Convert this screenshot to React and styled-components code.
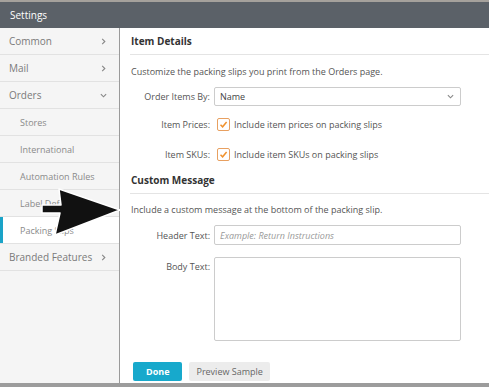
import React from 'react'
import styled, { createGlobalStyle } from 'styled-components'

const Global = createGlobalStyle`
    html, body {
        margin: 0;
        padding: 0;
        background: #fff;
    }
    body {
        font-family: "Open Sans", "Liberation Sans", sans-serif;
        color: #444;
    }
    * {
        box-sizing: border-box;
    }
`;

const Window = styled.div`
    position: relative;
    width: 489px;
    height: 387px;
    display: flex;
    flex-direction: column;
    border-top: 2px solid #a5a19c;
    border-bottom: 4px solid #9c9c9c;
    overflow: hidden;
`;

const TitleBar = styled.header`
    height: 26px;
    flex: none;
    background: #5b6168;
    color: #fff;
    font-size: 10px;
    display: flex;
    align-items: center;
    padding-left: 10px;
`;

const Body = styled.div`
    flex: 1;
    display: flex;
    min-height: 0;
`;

const Sidebar = styled.nav`
    width: 120px;
    flex: none;
    background: #f5f5f5;
    border-right: 1px solid #9a9a9a;
    display: flex;
    flex-direction: column;
`;

const NavItem = styled.div`
    height: 27px;
    flex: none;
    display: flex;
    align-items: center;
    justify-content: space-between;
    padding: 0 12px 0 ${p => (p.$sub ? '20px' : '9px')};
    font-size: ${p => (p.$sub ? '9px' : '10px')};
    color: ${p => (p.$sub ? '#8a8a8a' : '#7a7a7a')};
    border-bottom: 1px solid #e2e2e2;
    background: ${p => (p.$active ? '#fff' : 'transparent')};
    box-shadow: ${p => (p.$active ? 'inset 3px 0 0 #1aa3c8' : 'none')};
`;

const Chevron = styled.svg`
    width: 7px;
    height: 7px;
    fill: none;
    stroke: #888;
    stroke-width: 1.3;
`;

const Main = styled.main`
    flex: 1;
    background: #fff;
    padding: 0 0 0 10px;
    display: flex;
    flex-direction: column;
`;

const SectionTitle = styled.h3`
    margin: 0;
    height: 27px;
    flex: none;
    display: flex;
    align-items: center;
    padding-left: 1px;
    font-size: 10px;
    font-weight: 700;
    color: #333;
    border-bottom: 1px solid #e4e4e4;
`;

const Intro = styled.p`
    margin: 0;
    height: ${p => p.$h || '32px'};
    flex: none;
    display: flex;
    align-items: center;
    padding-left: 1px;
    font-size: 9px;
    color: #555;
`;

const FieldRow = styled.div`
    display: grid;
    grid-template-columns: 80px 247px;
    column-gap: 4px;
    align-items: ${p => (p.$top ? 'start' : 'center')};
    margin-bottom: ${p => p.$gap || '12px'};
`;

const Label = styled.label`
    text-align: right;
    font-size: 9px;
    color: #555;
    padding-top: ${p => (p.$top ? '3px' : '0')};
`;

const Select = styled.div`
    height: 19px;
    border: 1px solid #ccc;
    border-radius: 2px;
    display: flex;
    align-items: center;
    justify-content: space-between;
    padding: 0 6px 0 5px;
    font-size: 9px;
    color: #444;
`;

const Check = styled.span`
    width: 13px;
    height: 13px;
    border: 1px solid #e8a060;
    border-radius: 2px;
    display: inline-flex;
    align-items: center;
    justify-content: center;
    margin: 0 4px 0 3px;
    background: #fff;
`;

const CheckLine = styled.div`
    display: flex;
    align-items: center;
    font-size: 9px;
    color: #555;
`;

const TextInput = styled.div`
    height: 20px;
    border: 1px solid #ccc;
    border-radius: 2px;
    display: flex;
    align-items: center;
    padding-left: 5px;
    font-size: 9px;
    font-style: italic;
    color: #999;
`;

const TextArea = styled.div`
    height: 84px;
    border: 1px solid #ccc;
    border-radius: 2px;
`;

const Actions = styled.div`
    margin-top: auto;
    display: flex;
    gap: 7px;
    padding: 0 0 2px 3px;
`;

const Button = styled.button`
    height: 19px;
    border: none;
    border-radius: 2px;
    font-family: inherit;
    font-size: 9px;
    font-weight: ${p => (p.$primary ? 700 : 400)};
    padding: 0 ${p => (p.$primary ? '13px' : '7px')};
    background: ${p => (p.$primary ? '#17a9cc' : '#ececec')};
    color: ${p => (p.$primary ? '#fff' : '#666')};
`;

const Arrow = styled.svg`
    position: absolute;
    left: 0;
    top: 0;
    width: 489px;
    height: 387px;
    pointer-events: none;
`;

const Right = () => (
    <Chevron viewBox="0 0 8 8"><path d="M2.5 1 L5.5 4 L2.5 7" /></Chevron>
)
const Down = () => (
    <Chevron viewBox="0 0 8 8"><path d="M1 2.5 L4 5.5 L7 2.5" /></Chevron>
)
const Tick = () => (
    <svg width="9" height="9" viewBox="0 0 9 9" fill="none" stroke="#f0922e" strokeWidth="1.5">
        <path d="M1.5 4.8 L3.6 6.8 L7.6 2" />
    </svg>
)

export default () => {
    return (
        <>
        <Global />
        <Window>
            <TitleBar>Settings</TitleBar>
            <Body>
                <Sidebar>
                    <NavItem>Common <Right /></NavItem>
                    <NavItem>Mail <Right /></NavItem>
                    <NavItem>Orders <Down /></NavItem>
                    <NavItem $sub>Stores</NavItem>
                    <NavItem $sub>International</NavItem>
                    <NavItem $sub>Automation Rules</NavItem>
                    <NavItem $sub>Label Defaults</NavItem>
                    <NavItem $sub $active>Packing Slips</NavItem>
                    <NavItem>Branded Features <Right /></NavItem>
                </Sidebar>
                <Main>
                    <SectionTitle>Item Details</SectionTitle>
                    <Intro>Customize the packing slips you print from the Orders page.</Intro>
                    <FieldRow>
                        <Label>Order Items By:</Label>
                        <Select>Name <Down /></Select>
                    </FieldRow>
                    <FieldRow $gap="17px">
                        <Label>Item Prices:</Label>
                        <CheckLine><Check><Tick /></Check>Include item prices on packing slips</CheckLine>
                    </FieldRow>
                    <FieldRow $gap="6px">
                        <Label>Item SKUs:</Label>
                        <CheckLine><Check><Tick /></Check>Include item SKUs on packing slips</CheckLine>
                    </FieldRow>
                    <SectionTitle>Custom Message</SectionTitle>
                    <Intro $h="31px">Include a custom message at the bottom of the packing slip.</Intro>
                    <FieldRow>
                        <Label>Header Text:</Label>
                        <TextInput>Example: Return Instructions</TextInput>
                    </FieldRow>
                    <FieldRow $top>
                        <Label $top>Body Text:</Label>
                        <TextArea />
                    </FieldRow>
                    <Actions>
                        <Button $primary>Done</Button>
                        <Button>Preview Sample</Button>
                    </Actions>
                </Main>
            </Body>
            <Arrow viewBox="0 0 489 387">
                <polygon
                    points="42,203 61,203 59,187 120,208 55,233 60,211 42,211"
                    fill="#111"
                    stroke="#fff"
                    strokeWidth="1.5"
                    strokeLinejoin="round"
                />
            </Arrow>
        </Window>
        </>
    )
}
